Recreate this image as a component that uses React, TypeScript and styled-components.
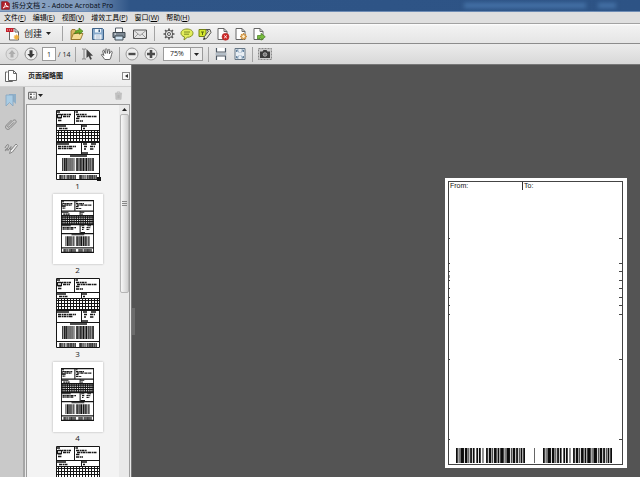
import React from "react";
import styled, { createGlobalStyle, css } from "styled-components";

const Global = createGlobalStyle`
  *, *::before, *::after { box-sizing: border-box; }
  html, body { margin: 0; padding: 0; }
  body {
    font-family: "Open Sans", "Noto Sans CJK SC", sans-serif;
    color: #1c1c1c;
    background: #545454;
  }
  button, input, select { font: inherit; color: inherit; margin: 0; }
`;

const Shell = styled.div`
  display: flex;
  flex-direction: column;
  height: 100vh;
  overflow: hidden;
`;

const TitleBar = styled.header`
  display: flex;
  align-items: center;
  justify-content: space-between;
  height: 12px;
  flex: none;
  padding: 0 24px 0 1px;
  background: linear-gradient(90deg, #8fa6c4 0, #7e99bc 85px, #2f5587 130px, #2d5385 100%);
  border-bottom: 1px solid #6f8db5;
`;

const TitleText = styled.h1`
  display: flex;
  align-items: center;
  gap: 2px;
  margin: 0;
  font-size: 7px;
  line-height: 11px;
  font-weight: 400;
  color: #060b14;
  white-space: nowrap;
`;

const Haze = styled.div`
  display: flex;
  gap: 12px;
  filter: blur(2px);
  &::before, &::after { content: ""; height: 5px; background: #4673a8; }
  &::before { width: 122px; }
  &::after { width: 18px; }
`;

const MenuBar = styled.nav`
  display: flex;
  gap: 7px;
  height: 12px;
  flex: none;
  padding: 0 4px;
  background: #dfdfdf;
  border-bottom: 1px solid #a2a2a2;
`;

const MenuButton = styled.button`
  padding: 0;
  border: 0;
  background: none;
  font-size: 7px;
  line-height: 10px;
  white-space: nowrap;
  color: #000;
`;

const Divider = styled.span`
  width: 1px;
  height: 15px;
  margin: 0 7px;
  background: #a3a3a3;
`;

const ToolRow = styled.div<{ $tone: "light" | "grey" }>`
  display: flex;
  align-items: center;
  flex: none;
  padding: 0 5px;
  ${(p) =>
    p.$tone === "light"
      ? css`
          height: 20px;
          background: linear-gradient(#fff 0, #f2f2f2 2px, #e6e6e6 18px);
          border-bottom: 1px solid #8c8c8c;
        `
      : css`
          height: 21px;
          background: linear-gradient(#ececec, #d8d8d8);
          border-bottom: 1px solid #777;
          ${Divider} { margin: 0 5px; }
        `}
`;

const Group = styled.div<{ $gap: number }>`
  display: flex;
  align-items: center;
  gap: ${(p) => p.$gap}px;
`;

const IconButton = styled.button`
  display: flex;
  flex: none;
  align-items: center;
  justify-content: center;
  width: 14px;
  height: 14px;
  padding: 0;
  border: 0;
  background: none;
`;

const CreateButton = styled.button`
  display: flex;
  align-items: center;
  gap: 4px;
  width: 50px;
  padding: 0 0 0 1px;
  border: 0;
  background: none;
  font-size: 9px;
  line-height: 14px;
  white-space: nowrap;
`;

const PageField = styled.label`
  display: flex;
  align-items: center;
  gap: 2px;
  width: 28px;
  margin-left: 4px;
  font-size: 7px;
  white-space: nowrap;
`;

const PageInput = styled.input`
  width: 14px;
  height: 14px;
  padding: 0;
  border: 1px solid #9a9a9a;
  background: #fff;
  text-align: center;
  font-size: 7px;
`;

const Zoom = styled.div`
  display: flex;
  position: relative;
  width: 40px;
  height: 14px;
  margin-left: 5px;
  border: 1px solid #9a9a9a;
  background: linear-gradient(90deg, #fff 26px, #9a9a9a 26px, #9a9a9a 27px, #ececec 27px);
`;

const ZoomSelect = styled.select`
  appearance: none;
  width: 100%;
  padding: 0 0 0 6px;
  border: 0;
  background: none;
  font-size: 7px;
  line-height: 12px;
`;

const ZoomCaret = styled.span`
  position: absolute;
  right: 3px;
  top: 5px;
  display: flex;
  pointer-events: none;
`;

const Workspace = styled.div`
  display: flex;
  flex: 1;
  min-height: 0;
`;

const SidePane = styled.aside`
  display: flex;
  flex-direction: column;
  flex: none;
  width: 132px;
  background: #e9e9e9;
  border-right: 1px solid #777;
`;

const PaneHeader = styled.div`
  display: flex;
  align-items: center;
  height: 22px;
  flex: none;
  padding: 0 1px 0 4px;
  background: linear-gradient(#fbfbfb, #ececec);
  border-bottom: 1px solid #d0d0d0;
`;

const PaneTitle = styled.h2`
  flex: 1;
  margin: 0 0 0 10px;
  font-size: 7px;
  line-height: 12px;
  font-weight: 700;
`;

const CollapseButton = styled.button`
  display: flex;
  align-items: center;
  justify-content: center;
  width: 8px;
  height: 8px;
  padding: 0;
  border: 1px solid #888;
  background: #fafafa;
`;

const PaneBody = styled.div`
  display: flex;
  flex: 1;
  min-height: 0;
`;

const Rail = styled.nav`
  display: flex;
  flex-direction: column;
  align-items: center;
  gap: 10px;
  flex: none;
  width: 25px;
  padding: 6px 2px 0 0;
  background: #c9c9c9;
  border-right: 2px solid #a6a6a6;
`;

const PagesPanel = styled.section`
  display: flex;
  flex-direction: column;
  flex: 1;
  min-width: 0;
  padding: 0 1px;
`;

const PanelTools = styled.div`
  display: flex;
  align-items: center;
  justify-content: space-between;
  flex: none;
  height: 17px;
  padding: 0 5px 0 2px;
`;

const OptionsButton = styled.button`
  display: flex;
  align-items: center;
  gap: 1px;
  padding: 0;
  border: 0;
  background: none;
`;

const ListFrame = styled.div`
  display: flex;
  flex: 1;
  min-height: 0;
  border: 1px solid #9c9c9c;
  border-bottom: 0;
  background: #f3f3f3;
`;

const ThumbList = styled.ol`
  flex: 1;
  margin: 0;
  padding: 5px 0 0 9px;
  list-style: none;
  overflow: hidden;
`;

const ThumbItem = styled.li`
  display: flex;
  flex-direction: column;
  align-items: center;
  height: 84px;
  font-size: 8px;
  line-height: 12px;
`;

const Sheet = styled.button<{ $small: boolean }>`
  display: flex;
  align-items: ${(p) => (p.$small ? "flex-start" : "center")};
  justify-content: center;
  flex: none;
  position: relative;
  width: ${(p) => (p.$small ? 50 : 44)}px;
  height: 70px;
  padding: ${(p) => (p.$small ? "6px 0 0" : "0")};
  border: 0;
  background: #fff;
  box-shadow: ${(p) => (p.$small ? "0 0 2px #aaa" : "none")};
`;

const Handle = styled.span`
  position: absolute;
  right: -1px;
  bottom: -1px;
  width: 4px;
  height: 4px;
  background: #111;
`;

const Scroll = styled.div`
  display: flex;
  flex-direction: column;
  align-items: center;
  flex: none;
  width: 10px;
  background: #e9e9e9;
`;

const ScrollUp = styled.button`
  display: flex;
  align-items: center;
  justify-content: center;
  width: 9px;
  height: 9px;
  padding: 0;
  border: 0;
  background: none;
`;

const ScrollThumb = styled.div`
  display: flex;
  align-items: center;
  justify-content: center;
  width: 9px;
  height: 48%;
  border: 1px solid #b4b4b4;
  border-radius: 2px;
  background: linear-gradient(90deg, #f7f7f7, #cfcfcf);
`;

const Viewer = styled.main`
  display: flex;
  flex: 1;
  align-items: flex-start;
  justify-content: flex-end;
  position: relative;
  min-width: 0;
  padding: 113px 13px 9px 0;
  background: #545454;
`;

const Splitter = styled.span`
  position: absolute;
  left: 0;
  top: 243px;
  width: 3px;
  height: 27px;
  background: #6c6c6c;
`;

const Page = styled.article`
  display: flex;
  position: relative;
  width: 182px;
  height: 290px;
  padding: 3px 4px 3px 3px;
  background: #fff;
`;

const PageFrame = styled.div`
  display: flex;
  flex-direction: column;
  justify-content: space-between;
  flex: 1;
  border: 1px solid #444;
`;

const Addresses = styled.div`
  display: grid;
  grid-template-columns: 73px 1fr;
  font-family: "Liberation Sans", Arial, sans-serif;
  font-size: 7px;
  line-height: 8px;
  color: #111;
`;

const Address = styled.span<{ $ruled?: boolean }>`
  padding-left: 1px;
  border-left: ${(p) => (p.$ruled ? "1px solid #333" : "0")};
`;

const Codes = styled.div`
  display: flex;
  align-items: flex-end;
  padding: 0 0 1px 7px;
`;

const CodeRule = styled.span`
  width: 1px;
  height: 15px;
  margin: 0 8px 0 9px;
  background: #666;
`;

const Ticks = styled.svg`
  position: absolute;
  left: 0;
  top: 0;
`;

const Caret = ({ up = false }: { up?: boolean }) => (
  <svg width="5" height="3" viewBox="0 0 5 3" aria-hidden="true">
    <path d={up ? "M0 3 2.5 0 5 3Z" : "M0 0H5L2.5 3Z"} fill="#222" />
  </svg>
);

const Glyph = ({ children, size = 14 }: { children: React.ReactNode; size?: number }) => (
  <svg width={size} height={size} viewBox="0 0 14 14" fill="none" aria-hidden="true">
    {children}
  </svg>
);

const docPath = "M2 1.5H8L11 4.5V12.5H2Z";

const icons: Record<string, React.ReactNode> = {
  logo: (
    <>
      <path d="M1 1H10L13 4V13H1Z" fill="#b3202a" stroke="#7c1118" />
      <path d="M3.5 11C6 8 7.500 5 7 3c-1.500 1 1 5 4.500 6C8.500 8 5.500 9 3.500 11Z" stroke="#fff" strokeWidth="1.400" />
    </>
  ),
  create: (
    <>
      <path d="M3.500 1.500H9L12.500 5V13H3.500Z" fill="#fff" stroke="#666" />
      <path d="M9 1.500V5H12.500" stroke="#666" />
      <path d="M0 1H7.500V5H0Z" fill="#c4202b" />
      <path d="M1.500 4V2M3.500 4V2M5.500 4V2" stroke="#e58e92" strokeWidth=".700" />
      <path d="M10.500 7.500V13M7.800 10.200H13.200M8.600 8.300 12.400 12.100M12.400 8.300 8.600 12.100" stroke="#f0b13e" strokeWidth="1.200" />
    </>
  ),
  open: (
    <>
      <path d="M1 4 2 2.500H5L6 4H10V12.500H1Z" fill="#d9b764" stroke="#8a6a1d" strokeWidth=".800" />
      <path d="M3.500 6.500H13L10.500 12.500H1Z" fill="#f5dd95" stroke="#8a6a1d" strokeWidth=".800" />
      <path d="M4.500 7C5 4 7 3 9 3V1L13 4.200 9.500 7.300V5.300C7.500 5.300 6.500 6 4.500 7Z" fill="#6bae28" stroke="#39730f" strokeWidth=".600" />
    </>
  ),
  save: (
    <>
      <path d="M1.500 1.500H11.500L12.500 2.500V12.500H1.500Z" fill="#88aacb" stroke="#3e6288" />
      <path d="M4 2H10V5.500H4Z" fill="#edf4fa" />
      <path d="M7.500 2.500H9V5H7.500Z" fill="#3e6288" />
      <path d="M3.500 7.500H10.500V12.500H3.500Z" fill="#fff" />
      <path d="M4.500 9H9.500M4.500 11H9.500" stroke="#7897b4" strokeWidth=".700" />
    </>
  ),
  print: (
    <>
      <path d="M3.500 1H10.500V6H3.500Z" fill="#fff" stroke="#565f68" />
      <path d="M1 5.500H13V10.500H1Z" fill="#7d8994" stroke="#414a52" />
      <path d="M3 9H11V13H3Z" fill="#cfe3f2" stroke="#414a52" />
      <path d="M2.500 7H4" stroke="#fff" />
    </>
  ),
  mail: (
    <>
      <path d="M.500 3H13.500V11.500H.500Z" fill="#e5e5e5" stroke="#555" />
      <path d="M1 3.500 7 8.500 13 3.500M1 11 5 7M13 11 9 7" stroke="#888" strokeWidth=".800" />
    </>
  ),
  gear: (
    <>
      <path d="M7 1.500V12.500M1.500 7H12.500M3.100 3.100 10.900 10.900M10.900 3.100 3.100 10.900" stroke="#555" strokeWidth="1.700" />
      <circle cx="7" cy="7" r="3.700" fill="#e6e6e6" stroke="#555" />
      <circle cx="7" cy="7" r="1.500" fill="#f7f7f7" stroke="#555" />
    </>
  ),
  comment: (
    <>
      <path d="M7 2C10.500 2 13 3.700 13 6.200S10.500 10.300 7.300 10.300L4 13 4.500 9.900C2.300 9.300 1 7.900 1 6.200 1 3.700 3.500 2 7 2Z" fill="#e2ed5a" stroke="#84902a" />
      <path d="M4 5H10M4 7.200H9" stroke="#70801c" strokeWidth=".900" />
    </>
  ),
  highlight: (
    <>
      <path d="M1 2.500H8V9.500H1Z" fill="#d6e82e" stroke="#728016" />
      <path d="M3 5H6M4.500 5V8" stroke="#596711" />
      <path d="M8 2.500H12L13 5.500 8.500 11.500 5.500 12.500 6.500 9.500 10.500 4Z" fill="#e8e8ca" stroke="#555" />
      <path d="M5.500 12.500 6.200 10.800 7.500 11.800Z" fill="#222" />
    </>
  ),
  docDelete: (
    <>
      <path d={docPath} fill="#fff" stroke="#666" />
      <path d="M8 1.500V4.500H11" stroke="#666" />
      <circle cx="9.500" cy="9.800" r="3.500" fill="#cf2524" stroke="#a33" strokeWidth=".600" />
      <path d="M8.200 8.500 10.800 11.100M10.800 8.500 8.200 11.100" stroke="#fff" />
    </>
  ),
  docGear: (
    <>
      <path d={docPath} fill="#fff" stroke="#666" />
      <path d="M8 1.500V4.500H11" stroke="#666" />
      <path d="M9.500 6V13M6 9.500H13M7.100 7.100 11.900 11.900M11.900 7.100 7.100 11.900" stroke="#cf8f3c" strokeWidth="1.300" />
      <circle cx="9.500" cy="9.500" r="1.900" fill="#fff1cf" stroke="#cf8f3c" />
    </>
  ),
  docExport: (
    <>
      <path d={docPath} fill="#fff" stroke="#666" />
      <path d="M8 1.500V4.500H11" stroke="#666" />
      <path d="M5.500 12V8.500H9V6.300L13.300 9.800 9 13.200V11H7.500V12Z" fill="#79bd3f" stroke="#487e20" strokeWidth=".700" />
    </>
  ),
  up: (
    <>
      <circle cx="7" cy="7" r="6" fill="#dedede" stroke="#bbb" />
      <path d="M7 3 10.500 7H8.500V10.500H5.500V7H3.500Z" fill="#adadad" />
    </>
  ),
  down: (
    <>
      <circle cx="7" cy="7" r="6" fill="#eee" stroke="#8c8c8c" />
      <path d="M7 11 3.300 7H5.500V3.300H8.500V7H10.700Z" fill="#3a3a3a" />
    </>
  ),
  select: (
    <>
      <path d="M1 2H2.200L3 2.500 3.800 2H5M3 2.500V11.500M1 12H2.200L3 11.500 3.800 12H5" stroke="#777" strokeWidth=".900" />
      <path d="M5.500 2V11L7.700 9.200 9.200 12.700 10.900 12 9.300 8.700H12Z" fill="#444" />
    </>
  ),
  hand: (
    <path d="M4.800 12.500C4 10.800 2.200 9.300 1.300 7.800 1.800 6.900 3 7.200 3.800 8.500L2.700 4C3 3 4 3 4.300 4L5.300 6.500 5.200 2.500C5.500 1.500 6.700 1.500 7 2.500L7.300 6.300 8.300 2.700C8.800 2 9.800 2.300 9.700 3.300L9.300 6.800 10.900 4.500C11.700 4 12.500 4.600 12.200 5.500 11.200 8 11.200 10.500 9.800 12.500Z" fill="#fff" stroke="#555" strokeWidth=".900" />
  ),
  minus: (
    <>
      <circle cx="7" cy="7" r="6" fill="#eee" stroke="#999" />
      <path d="M3.500 7H10.500" stroke="#4b4b4b" strokeWidth="2.400" />
    </>
  ),
  plus: (
    <>
      <circle cx="7" cy="7" r="6" fill="#eee" stroke="#999" />
      <path d="M3 7H11M7 3V11" stroke="#4b4b4b" strokeWidth="2.600" />
    </>
  ),
  fitWidth: (
    <>
      <path d="M2.500 1V5H11.500V1M2.500 13V9H11.500V13" fill="#fff" stroke="#4e5965" strokeWidth="1.200" />
      <path d="M1.500 7H12.500" stroke="#7d93a8" strokeWidth=".900" />
    </>
  ),
  fitPage: (
    <>
      <path d="M2 1.500H12V12.500H2Z" fill="#e8eef4" stroke="#667684" />
      <path d="M3.500 5V3H5.500M8.500 3H10.500V5M10.500 9V11H8.500M5.500 11H3.500V9M3.500 3 6 5.500M10.500 3 8 5.500M10.500 11 8 8.500M3.500 11 6 8.500" stroke="#5c7d9c" strokeWidth=".900" />
    </>
  ),
  camera: (
    <>
      <path d="M.500 1.500H13.500V12.500H.500Z" fill="#ccc" stroke="#888" strokeDasharray="2 1" />
      <path d="M2 4.500H4.500L5.500 3H8.500L9.500 4.500H12V11H2Z" fill="#3b3b3b" />
      <circle cx="7" cy="7.500" r="1.800" fill="#777" stroke="#bbb" strokeWidth=".800" />
    </>
  ),
  pages: (
    <>
      <path d="M3.500 3H1.500V12.500H8.500V11.500" fill="#fff" stroke="#666" />
      <path d="M4.500 1.500H9.500L12.500 4.500V11.500H4.500Z" fill="#fff" stroke="#666" />
      <path d="M9.500 1.500V4.500H12.500" stroke="#666" />
    </>
  ),
  bookmark: (
    <>
      <path d="M5 1H12V11L9.500 8.500 7 11V9H5Z" fill="#8fafc8" />
      <path d="M2 2H9V13L5.500 9.500 2 13Z" fill="#a9cce4" stroke="#86a5bf" strokeWidth=".800" />
    </>
  ),
  clip: (
    <path d="M4 8.500 8.800 3.700C11 1.700 13.400 4 11.500 6L6 11.500C3.200 14 0 10.800 2.500 8L7.500 3M4 8.500C3 9.700 4.200 11 5.500 9.800L10 5.300" stroke="#858585" />
  ),
  sign: (
    <>
      <path d="M1 7C3 2 6 3 4 6.500S1 11 1.500 8.500C3 7 4 8 4 9.500L7 5.500 6.500 9C8 9 8 7 9 6.500" stroke="#858585" />
      <path d="M5.500 12.500 6.500 9.500 12 3 13.500 4.500 8.500 11Z" fill="#eee" stroke="#858585" />
    </>
  ),
  options: (
    <>
      <path d="M1 2H13V12.500H1Z" fill="#fafafa" stroke="#555" strokeWidth="1.500" />
      <path d="M3 5H6M3 9.500H6" stroke="#555" strokeWidth="2.500" />
      <path d="M8 5H11M8 9.500H11" stroke="#777" strokeWidth="1.300" />
    </>
  ),
  trash: (
    <>
      <path d="M1.500 3.500H12.500M5 3V1.500H9V3" stroke="#bbb" strokeWidth="1.500" />
      <path d="M2.500 4.500H11.500L11 13H3Z" fill="#c8c8c8" stroke="#b5b5b5" />
      <path d="M5 6V11.500M7 6V11.500M9 6V11.500" stroke="#aaa" />
    </>
  ),
};

const Tool = ({ name, label }: { name: string; label: string }) => (
  <IconButton type="button" aria-label={label}>
    <Glyph>{icons[name]}</Glyph>
  </IconButton>
);

/* Alternating bar and space widths, in modules. */
const modules = [2, 1, 1, 1, 4, 1, 3, 1, 1, 1, 2, 1, 2, 2, 2, 1, 2, 2, 1, 3, 2, 1, 3, 1, 1, 1, 3, 1, 2, 1, 4, 1, 1, 1, 4, 1, 1, 1, 3, 1, 2, 1, 1, 1, 2, 1, 2];
const total = modules.reduce((a, b) => a + b, 0);

const barPath = (x: number, y: number, w: number, h: number) => {
  let at = x;
  return modules
    .map((m, i) => {
      const span = (m * w) / total;
      const d = i % 2 === 0 ? `M${at} ${y}h${span}v${h}h${-span}Z` : "";
      at += span;
      return d;
    })
    .join("");
};

const Barcode = () => (
  <svg width="69" height="15" viewBox="0 0 69 15" role="img" aria-label="Barcode">
    <path d={barPath(0, 0, 69, 15)} fill="#0c0c0c" />
  </svg>
);

const gridPath =
  Array.from({ length: 14 }, (_, i) => `M${i * 3 + 2.5} 21V32`).join("") +
  Array.from({ length: 4 }, (_, i) => `M0 ${i * 3 + 22.5}H44`).join("");

const LabelDrawing = ({ small }: { small: boolean }) => (
  <svg
    width={small ? 33 : 44}
    height={small ? 53 : 70}
    viewBox="0 0 44 70"
    fill="none"
    stroke="#161616"
    strokeWidth={small ? 1.4 : 1}
    aria-hidden="true"
  >
    <path d="M.500 .500H43.500V69.500H.500ZM0 14.500H44M0 20.500H44M0 32.500H44M0 44.500H44M0 63.500H44M18.500 0V14.500M25.500 14.500V20.500M25.500 32.500V44.500" />
    <path d={gridPath} />
    <path d="M1 2H4M19.500 2H22M1 16H10M26 16H31M1 34H13M27 34H31M35 34H40M14 46H31M26 43H32" strokeWidth="1.400" />
    <path d="M2 4.500H15M7 6.500H14M2 7.500H6M2 10.500H6M20 4.500H31M21 6.500H41M20 8.500H24M20 11H27M3 18.500H12M27 18.500H29M2 36.500H20M2 38.500H17M28 36.500H31M34 36.500H39M28 39H30M34 39H38" strokeDasharray="3 .6 1.500 .4" strokeWidth="1.400" />
    <path d="M1.500 4V8H5.500V4" />
    <path d={barPath(6, 48, 32, 13) + barPath(3, 65, 17, 4) + barPath(23, 65, 18, 4)} fill="#111" stroke="none" />
  </svg>
);

const thumbs = [
  { page: 1, caption: "1" },
  { page: 2, caption: "2" },
  { page: 3, caption: "3" },
  { page: 4, caption: "4" },
  { page: 5, caption: "" },
];

const tickRows = [60, 85, 93, 102, 110, 119, 127, 136, 181, 261];

const menus = ["文件|F", "编辑|E", "视图|V", "增效工具|P", "窗口|W", "帮助|H"];

export default function App() {
  return (
    <Shell>
      <Global />
      <TitleBar>
        <TitleText>
          <Glyph size={9}>{icons.logo}</Glyph>
          拆分文档 2 - Adobe Acrobat Pro
        </TitleText>
        <Haze />
      </TitleBar>
      <MenuBar>
        {menus.map((m) => {
          const [name, key] = m.split("|");
          return (
            <MenuButton key={key} type="button">
              {name}(<u>{key}</u>)
            </MenuButton>
          );
        })}
      </MenuBar>

      <ToolRow $tone="light">
        <CreateButton type="button">
          <Glyph>{icons.create}</Glyph>
          创建
          <Caret />
        </CreateButton>
        <Divider />
        <Group $gap={7}>
          <Tool name="open" label="打开" />
          <Tool name="save" label="保存" />
          <Tool name="print" label="打印" />
          <Tool name="mail" label="电子邮件" />
        </Group>
        <Divider />
        <Group $gap={4}>
          <Tool name="gear" label="设置" />
          <Tool name="comment" label="批注" />
          <Tool name="highlight" label="高亮" />
          <Tool name="docDelete" label="删除页面" />
          <Tool name="docGear" label="页面设置" />
          <Tool name="docExport" label="导出页面" />
        </Group>
      </ToolRow>

      <ToolRow $tone="grey">
        <Group $gap={5}>
          <Tool name="up" label="上一页" />
          <Tool name="down" label="下一页" />
        </Group>
        <PageField>
          <PageInput defaultValue="1" aria-label="页码" />/ 14
        </PageField>
        <Divider />
        <Group $gap={5}>
          <Tool name="select" label="选择" />
          <Tool name="hand" label="手形" />
        </Group>
        <Divider />
        <Group $gap={5}>
          <Tool name="minus" label="缩小" />
          <Tool name="plus" label="放大" />
        </Group>
        <Zoom>
          <ZoomSelect aria-label="缩放" defaultValue="75%">
            <option>75%</option>
          </ZoomSelect>
          <ZoomCaret>
            <Caret />
          </ZoomCaret>
        </Zoom>
        <Divider />
        <Group $gap={5}>
          <Tool name="fitWidth" label="适合宽度" />
          <Tool name="fitPage" label="适合页面" />
        </Group>
        <Divider />
        <Tool name="camera" label="快照" />
      </ToolRow>

      <Workspace>
        <SidePane>
          <PaneHeader>
            <Tool name="pages" label="页面" />
            <PaneTitle>页面缩略图</PaneTitle>
            <CollapseButton type="button" aria-label="折叠">
              <svg width="3" height="4" viewBox="0 0 3 4" aria-hidden="true">
                <path d="M3 0V4L0 2Z" fill="#333" />
              </svg>
            </CollapseButton>
          </PaneHeader>
          <PaneBody>
            <Rail>
              <Tool name="bookmark" label="书签" />
              <Tool name="clip" label="附件" />
              <Tool name="sign" label="签名" />
            </Rail>
            <PagesPanel>
              <PanelTools>
                <OptionsButton type="button" aria-label="选项">
                  <Glyph size={9}>{icons.options}</Glyph>
                  <Caret />
                </OptionsButton>
                <IconButton type="button" aria-label="删除">
                  <Glyph size={9}>{icons.trash}</Glyph>
                </IconButton>
              </PanelTools>
              <ListFrame>
                <ThumbList>
                  {thumbs.map(({ page, caption }) => {
                    const small = page % 2 === 0;
                    return (
                      <ThumbItem key={page}>
                        <Sheet type="button" $small={small} aria-label={`第 ${page} 页`}>
                          <LabelDrawing small={small} />
                          {page === 1 && <Handle />}
                        </Sheet>
                        {caption}
                      </ThumbItem>
                    );
                  })}
                </ThumbList>
                <Scroll>
                  <ScrollUp type="button" aria-label="向上滚动">
                    <Caret up />
                  </ScrollUp>
                  <ScrollThumb>
                    <svg width="5" height="5" viewBox="0 0 5 5" aria-hidden="true">
                      <path d="M0 .5H5M0 2.500H5M0 4.500H5" stroke="#888" />
                    </svg>
                  </ScrollThumb>
                </Scroll>
              </ListFrame>
            </PagesPanel>
          </PaneBody>
        </SidePane>

        <Viewer>
          <Splitter />
          <Page>
            <PageFrame>
              <Addresses>
                <Address>From:</Address>
                <Address $ruled>To:</Address>
              </Addresses>
              <Codes>
                <Barcode />
                <CodeRule />
                <Barcode />
              </Codes>
            </PageFrame>
            <Ticks width="182" height="290" viewBox="0 0 182 290" aria-hidden="true">
              <path
                d={tickRows.map((y) => `M4 ${y + 0.5}H5M174 ${y + 0.5}H177`).join("")}
                stroke="#444"
              />
              <path d="M4.500 97V100" stroke="#999" />
            </Ticks>
          </Page>
        </Viewer>
      </Workspace>
    </Shell>
  );
}
